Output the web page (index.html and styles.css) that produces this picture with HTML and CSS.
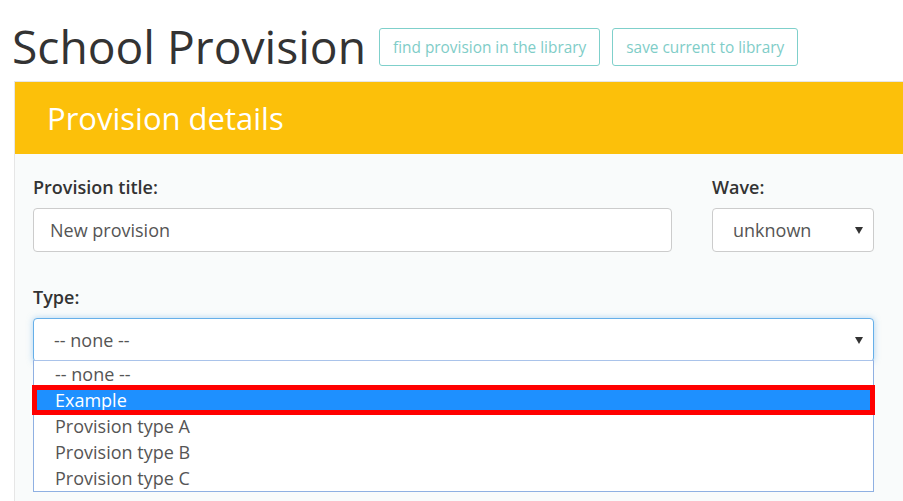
FILE: index.html
```html
<!DOCTYPE html>
<html lang="en">
<head>
<meta charset="utf-8">
<title>School Provision</title>
<link rel="stylesheet" href="styles.css">
</head>
<body>
<div class="page">
  <header class="top">
    <h1 class="title">School Provision</h1>
    <button class="btn-outline" type="button">find provision in the library</button>
    <button class="btn-outline" type="button">save current to library</button>
  </header>
  <section class="panel">
    <div class="panel-heading">Provision details</div>
    <div class="panel-body">
      <div class="row">
        <div class="field">
          <label class="label">Provision title:</label>
          <div class="input">New provision</div>
        </div>
        <div class="field">
          <label class="label">Wave:</label>
          <div class="select"><span>unknown</span><span class="arrow"></span></div>
        </div>
      </div>
      <div class="field field-type">
        <label class="label">Type:</label>
        <div class="select-wrap">
          <div class="select focused"><span>-- none --</span><span class="arrow"></span></div>
          <ul class="dropdown">
            <li class="option">-- none --</li>
            <li class="option selected">Example</li>
            <li class="option">Provision type A</li>
            <li class="option">Provision type B</li>
            <li class="option">Provision type C</li>
          </ul>
        </div>
      </div>
    </div>
  </section>
</div>
</body>
</html>
```
FILE: styles.css
```css
html, body {
  margin: 0;
  padding: 0;
  background: #ffffff;
  overflow: hidden;
}
body {
  font-family: "Open Sans", "Liberation Sans", sans-serif;
  color: #333333;
}
.page {
  box-sizing: border-box;
  padding-left: 14px;
  height: 501px;
  display: flex;
  flex-direction: column;
}
.top {
  display: flex;
  align-items: center;
  gap: 12px;
  height: 62px;
  padding-top: 16px;
  margin-bottom: 3px;
  flex: none;
}
.title {
  margin: 0 1px 0 -2px;
  font-weight: 400;
  font-size: 46.2px;
  line-height: 1.1;
  color: #333333;
}
.btn-outline {
  height: 38px;
  padding: 0 13px;
  border: 1.5px solid #7fd0cb;
  border-radius: 3px;
  background: #ffffff;
  color: #7fcdc8;
  font-family: "Open Sans", "Liberation Sans", sans-serif;
  font-size: 15.4px;
}
.panel {
  flex: 1;
  min-height: 0;
  margin-right: -40px;
  border: 1px solid #e6e6e6;
  border-bottom: none;
  background: #f9fbfb;
}
.panel-heading {
  height: 72px;
  display: flex;
  align-items: center;
  padding-left: 32px;
  background: #fcc00a;
  color: #ffffff;
  font-size: 31px;
}
.panel-body {
  padding: 20px 0 0 18px;
  width: 841px;
}
.row {
  display: grid;
  grid-template-columns: 1fr 162px;
  gap: 40px;
  margin-bottom: 32px;
}
.field {
  display: flex;
  flex-direction: column;
}
.label {
  display: block;
  font-size: 18px;
  font-weight: 600;
  line-height: 26px;
  margin-bottom: 8px;
  color: #333333;
}
.input, .select {
  box-sizing: border-box;
  height: 44px;
  border: 1px solid #cccccc;
  border-radius: 4px;
  background: #ffffff;
  font-size: 18px;
  color: #555555;
  display: flex;
  align-items: center;
}
.input {
  padding-left: 16px;
}
.select {
  padding: 0 10px 0 20px;
  justify-content: space-between;
}
.arrow {
  width: 0;
  height: 0;
  border-left: 4px solid transparent;
  border-right: 4px solid transparent;
  border-top: 7px solid #333333;
}
.select.focused {
  border-color: #66afe9;
  box-shadow: 0 0 6px rgba(102, 175, 233, 0.5);
}
.select-wrap {
  position: relative;
}
.dropdown {
  position: absolute;
  left: 0;
  right: 0;
  top: 42px;
  margin: 0;
  padding: 0;
  list-style: none;
  background: #ffffff;
  border: 1px solid #8fb0e2;
  border-top-color: #a9c3ea;
}
.option {
  height: 26px;
  line-height: 26px;
  padding-left: 21px;
  font-size: 18px;
  color: #555555;
}
.option.selected {
  background: #1e90ff;
  color: #ffffff;
  outline: 5px solid #ff0000;
  outline-offset: -3px;
}
```
